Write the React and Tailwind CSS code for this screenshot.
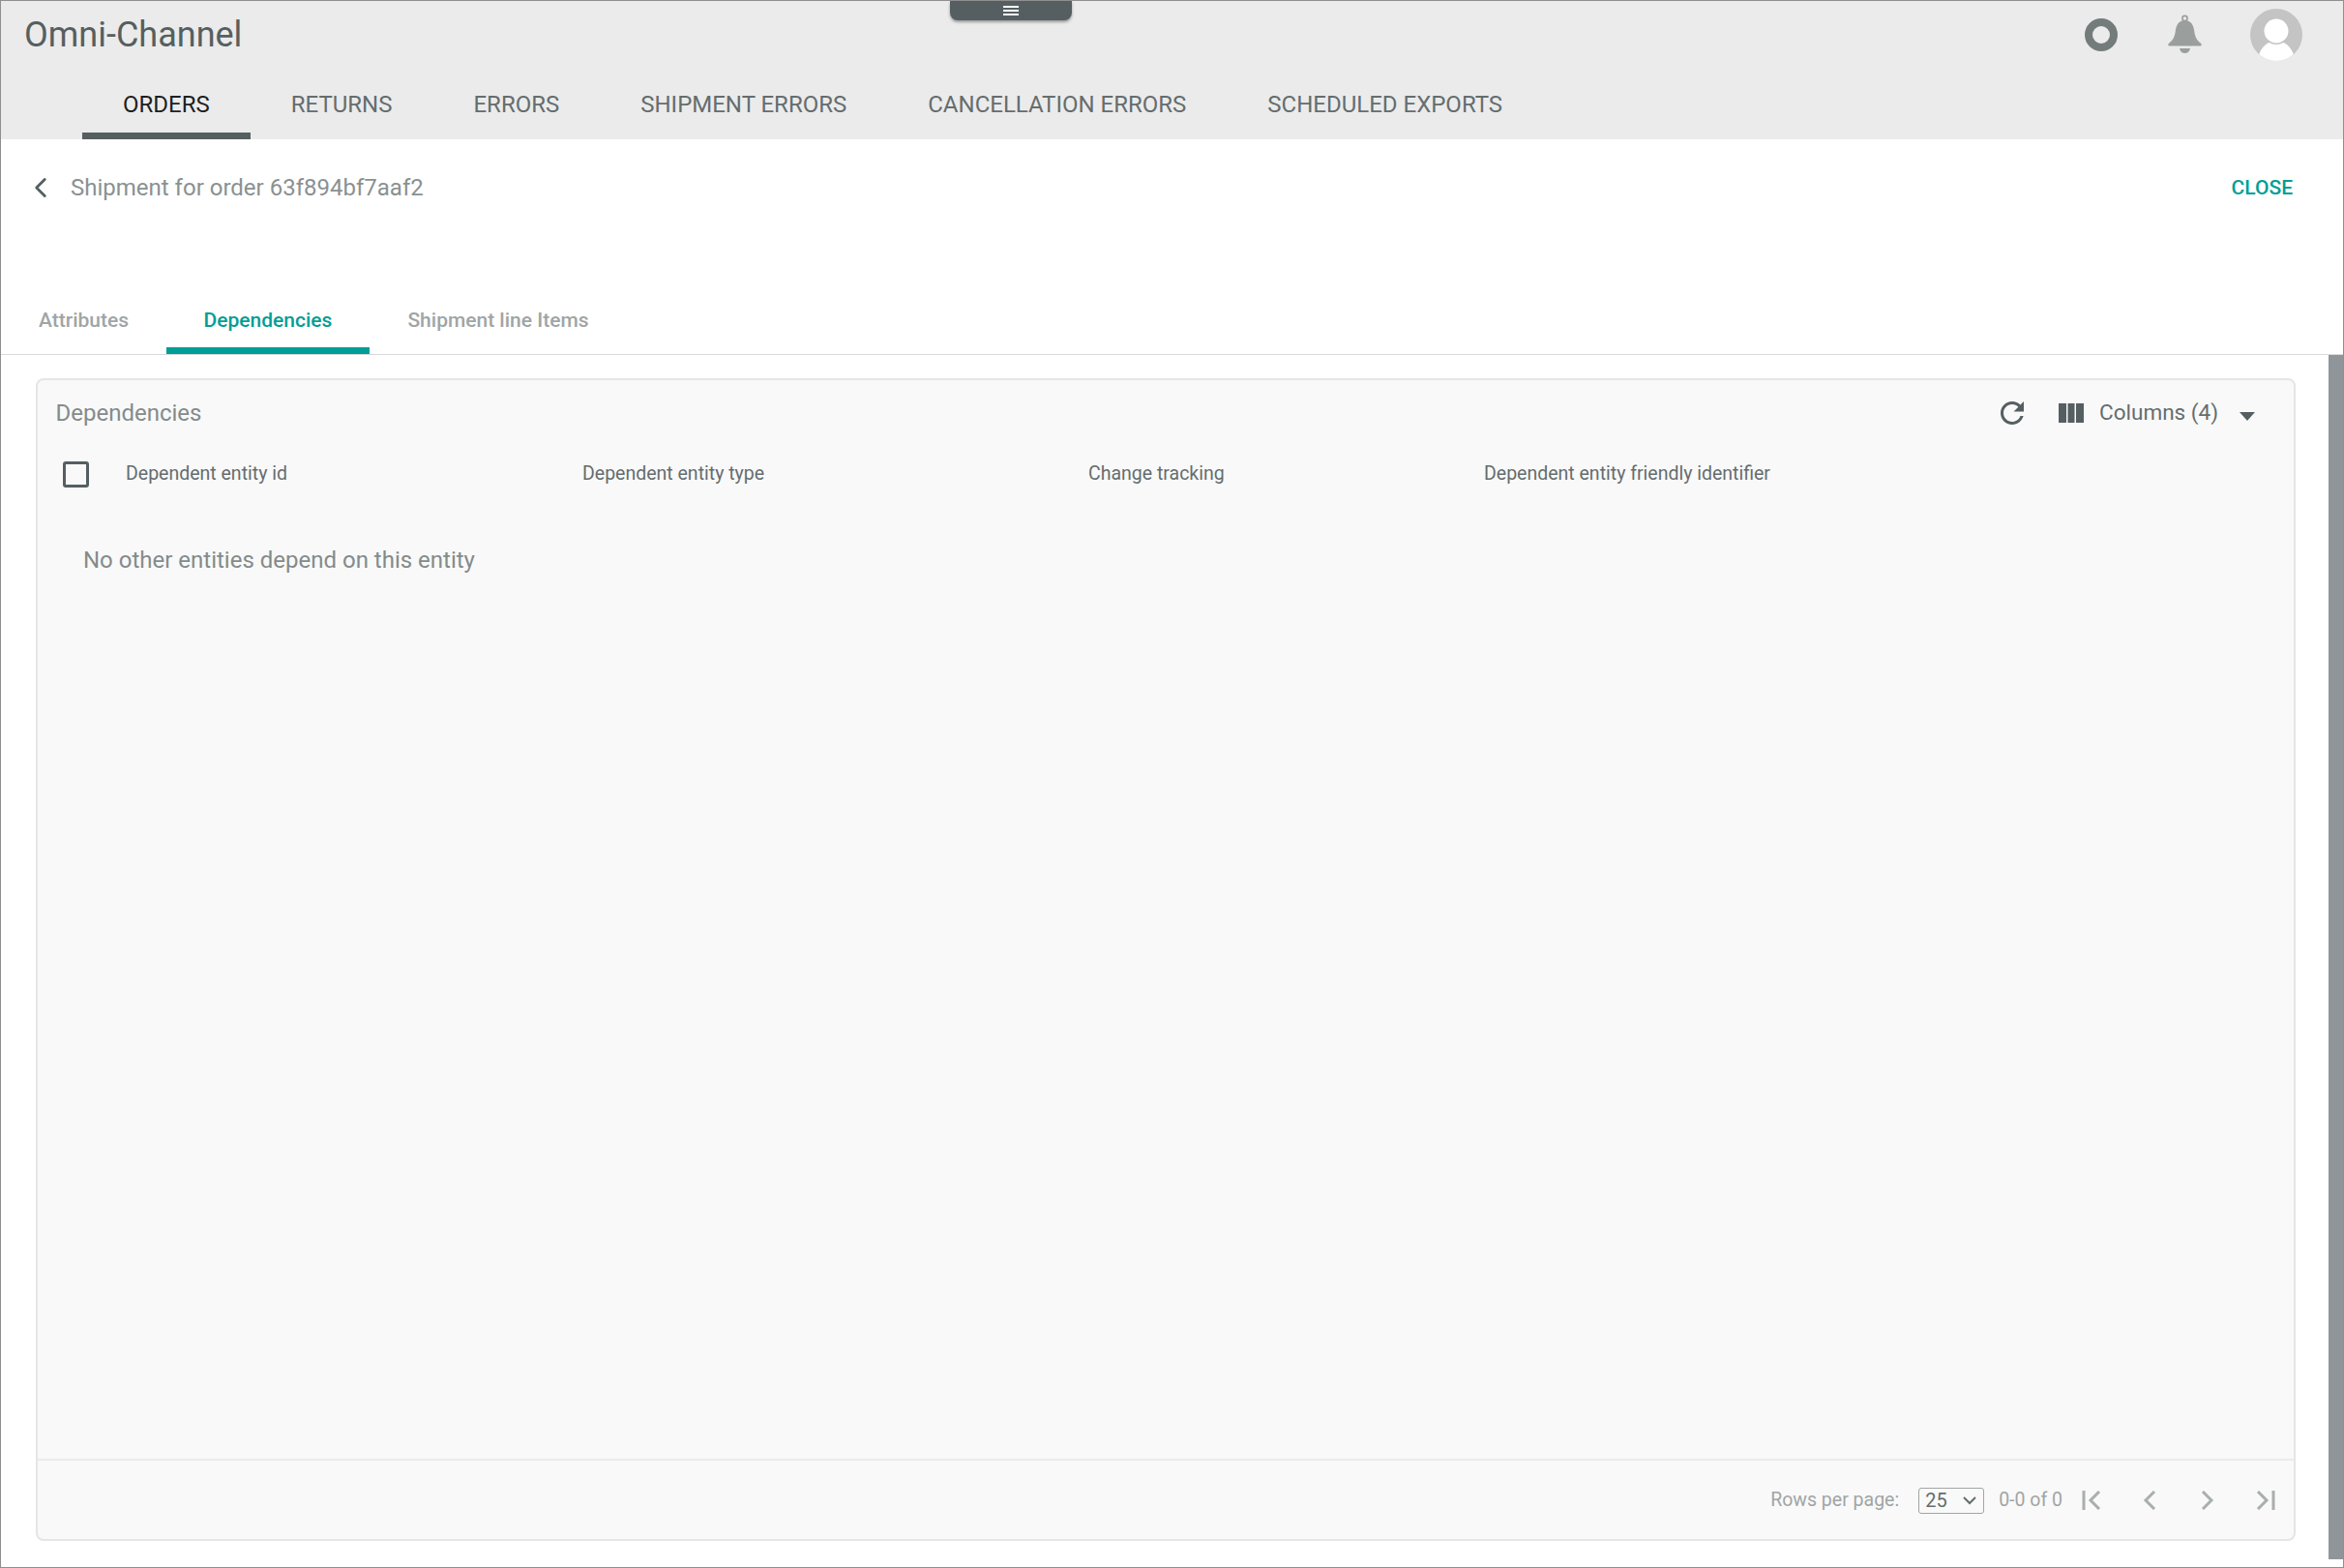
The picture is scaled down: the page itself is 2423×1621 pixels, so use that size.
import { ChevronLeft } from 'lucide-react';

const NAV_TABS = ['ORDERS', 'RETURNS', 'ERRORS', 'SHIPMENT ERRORS', 'CANCELLATION ERRORS', 'SCHEDULED EXPORTS'];
const SUB_TABS = ['Attributes', 'Dependencies', 'Shipment line Items'];

function Bell() {
  return (
    <svg width="35" height="42" viewBox="0 0 35 42" className="text-[#9a9f9e]">
      <circle cx="17.5" cy="4" r="2.6" fill="none" stroke="currentColor" strokeWidth="1.6" />
      <path
        d="M17.5 6C11 6 8.6 11 7.8 17c-.7 5.5-2.2 9.2-7 13-.8.7-.8 2.5.6 2.5h32.2c1.4 0 1.4-1.8.6-2.5-4.8-3.8-6.3-7.500-7-13C26.400 11 24 6 17.500 6z"
        fill="currentColor"
      />
      <path d="M12 35h11c-.4 3-2.700 5-5.500 5S12.400 38 12 35z" fill="currentColor" />
    </svg>
  );
}

function Avatar() {
  return (
    <svg width="54" height="54" viewBox="0 0 54 54">
      <clipPath id="avatar-clip">
        <circle cx="27" cy="27" r="27" />
      </clipPath>
      <circle cx="27" cy="27" r="27" fill="#c4c4c4" />
      <g clipPath="url(#avatar-clip)">
        <ellipse cx="27" cy="55" rx="19" ry="22" fill="#fff" />
        <circle cx="27" cy="23" r="14" fill="#c4c4c4" />
        <circle cx="27" cy="23" r="12.500" fill="#fff" />
      </g>
    </svg>
  );
}

function PagerIcon({ d }) {
  return (
    <svg width="20" height="20" viewBox="0 0 20 20" fill="none" stroke="#a9aeae" strokeWidth="3">
      <path d={d} />
    </svg>
  );
}

export default function App() {
  return (
    <div className="relative flex h-[1621px] w-full flex-col overflow-hidden border border-[#8f8f8f] bg-white font-['Roboto',sans-serif]">
      {/* Menu handle */}
      <div className="absolute left-[981px] top-0 flex h-[20px] w-[126px] flex-col items-center justify-center gap-[2px] rounded-b-lg bg-[#555f61] shadow-[0_2px_3px_rgba(0,0,0,0.35)]">
        <div className="h-[2px] w-[16px] bg-white" />
        <div className="h-[2px] w-[16px] bg-white" />
        <div className="h-[2px] w-[16px] bg-white" />
      </div>

      {/* Header */}
      <header className="h-[143px] shrink-0 bg-[#ebebeb]">
        <div className="flex h-[69px] items-center justify-between pl-[24px] pr-[42px]">
          <h1 className="text-[36px] font-normal text-[#555f61]">Omni-Channel</h1>
          <div className="flex items-center">
            <div className="h-[34px] w-[34px] rounded-full border-[8px] border-[#747b7b]" />
            <div className="ml-[52px]">
              <Bell />
            </div>
            <div className="ml-[50px]">
              <Avatar />
            </div>
          </div>
        </div>
        <nav className="flex h-[74px] pl-[84px]">
          {NAV_TABS.map((tab, i) => (
            <div
              key={tab}
              className={
                i === 0
                  ? 'flex items-center border-b-[7px] border-[#555f61] px-[42px] pt-[9px] text-[24px] text-[#1f1f1f]'
                  : 'flex items-center border-b-[7px] border-transparent px-[42px] pt-[9px] text-[24px] text-[#656d6e]'
              }
            >
              {tab}
            </div>
          ))}
        </nav>
      </header>

      {/* Page title */}
      <div className="flex h-[100px] shrink-0 items-center justify-between pl-[24px] pr-[52px]">
        <div className="flex items-center gap-[14px]">
          <ChevronLeft size={34} strokeWidth={2} className="text-[#555f61]" />
          <span className="text-[24px] text-[#8a9191]">Shipment for order 63f894bf7aaf2</span>
        </div>
        <button className="pt-[2px] text-[21px] font-medium text-[#009e96]">CLOSE</button>
      </div>

      {/* Sub tabs */}
      <div className="mt-[59px] flex h-[64px] shrink-0 border-b border-[#d9d9d9]">
        {SUB_TABS.map((tab, i) => (
          <div
            key={tab}
            className={
              i === 1
                ? 'flex items-center border-b-[7px] border-[#009e96] px-[39px] pt-[1px] text-[21px] font-medium text-[#009e96]'
                : 'flex items-center border-b-[7px] border-transparent pl-[39px] pr-[38.500px] pt-[1px] text-[21px] font-medium text-[#a0a5a5]'
            }
          >
            {tab}
          </div>
        ))}
      </div>

      <div className="flex min-h-0 flex-1">
        <main className="min-w-0 flex-1 pb-[27px] pl-[36px] pr-[34px] pt-[24px]">
          <section className="flex h-full flex-col rounded-lg border-2 border-[#e5e5e5] bg-[#f9f9f9]">
            {/* Card toolbar */}
            <div className="flex h-[70px] shrink-0 items-center justify-between pl-[18.500px] pr-[40px]">
              <h2 className="pb-[3px] text-[24px] font-normal text-[#848b8b]">Dependencies</h2>
              <div className="-mt-[2px] flex items-center">
                <svg width="36" height="36" viewBox="0 0 24 24" fill="#555f61">
                  <path d="M17.650 6.350C16.200 4.900 14.210 4 12 4c-4.420 0-7.990 3.580-7.990 8s3.570 8 7.990 8c3.730 0 6.840-2.550 7.730-6h-2.080c-.82 2.330-3.040 4-5.650 4-3.310 0-6-2.690-6-6s2.690-6 6-6c1.660 0 3.140.69 4.220 1.780L13 11h7V4l-2.350 2.350z" />
                </svg>
                <svg width="26" height="20" viewBox="0 0 26 20" fill="#555f61" className="ml-[30px]">
                  <rect x="0" width="8" height="20" />
                  <rect x="9.500" width="7" height="20" />
                  <rect x="18" width="8" height="20" />
                </svg>
                <span className="ml-[16px] text-[22.500px] text-[#656d6e]">Columns (4)</span>
                <svg width="16" height="9" viewBox="0 0 16 9" fill="#555f61" className="ml-[22px] mt-[6px]">
                  <path d="M0 0h16L8 9z" />
                </svg>
              </div>
            </div>

            {/* Table head */}
            <div className="flex h-[53px] shrink-0 items-center pl-[26px] text-[19.500px] text-[#656d6e]">
              <div className="mt-[1px] h-[27px] w-[27px] rounded-[3px] border-[3px] border-[#555f61]" />
              <div className="ml-[38px] w-[472px]">Dependent entity id</div>
              <div className="w-[523px]">Dependent entity type</div>
              <div className="w-[409px]">Change tracking</div>
              <div>Dependent entity friendly identifier</div>
            </div>

            <div className="flex-1 pl-[47px] pt-[48px] text-[24px] leading-[30px] text-[#848b8b]">
              No other entities depend on this entity
            </div>

            {/* Pagination */}
            <footer className="flex h-[83px] shrink-0 items-center justify-end border-t-2 border-[#ebebeb] pr-[19px] text-[19.500px] text-[#a0a5a5]">
              <span>Rows per page:</span>
              <div className="relative ml-[20px] h-[27px] w-[68px]">
                <select className="h-full w-full appearance-none rounded-[3px] border border-[#a0a5a5] pl-[6px] text-[20px] leading-none text-[#656d6e]">
                  <option>25</option>
                </select>
                <svg width="14" height="9" viewBox="0 0 14 9" fill="none" stroke="#656d6e" strokeWidth="2" className="absolute right-[8px] top-[10px]">
                  <path d="M1 1l6 6 6-6" />
                </svg>
              </div>
              <span className="ml-[15px]">0-0 of 0</span>
              <div className="ml-[20px] flex items-center gap-[40px]">
                <PagerIcon d="M2 0v20M18 1l-9 9 9 9" />
                <PagerIcon d="M15 1l-9 9 9 9" />
                <PagerIcon d="M5 1l9 9-9 9" />
                <PagerIcon d="M18 0v20M2 1l9 9-9 9" />
              </div>
            </footer>
          </section>
        </main>
        <div className="mb-[8px] w-[15px] shrink-0 bg-[#90959a]" />
      </div>
    </div>
  );
}
